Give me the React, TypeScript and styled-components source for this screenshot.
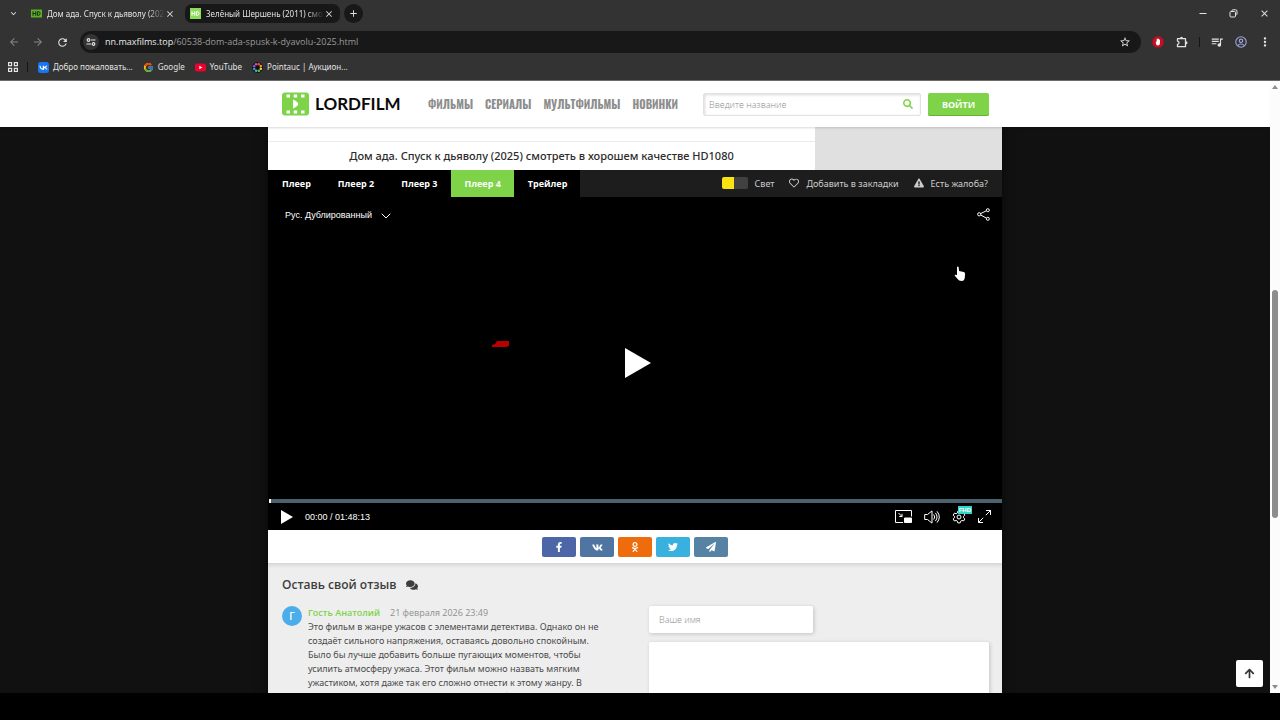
import React from "react";
import styled, { createGlobalStyle, css } from "styled-components";
import {
  FaComments,
  FaExclamationTriangle,
  FaFacebookF,
  FaOdnoklassniki,
  FaPaperPlane,
  FaRegHeart,
  FaSearch,
  FaTwitter,
  FaVk,
  FaArrowUp,
} from "react-icons/fa";
import {
  MdArrowBack,
  MdArrowForward,
  MdClose,
  MdExpandMore,
  MdMoreVert,
  MdQueueMusic,
  MdRefresh,
  MdStarBorder,
  MdAdd,
} from "react-icons/md";
import { FcGoogle } from "react-icons/fc";

const siteFont = `"Open Sans", "Noto Sans", sans-serif`;
const textFont = `"Noto Sans", "Open Sans", sans-serif`;
const green = "#7ed348";

const GlobalStyle = createGlobalStyle`
  * { box-sizing: border-box; }
  body { margin: 0; background: #000; font-family: ${siteFont}; }
  button, input, textarea { font-family: inherit; margin: 0; border: 0; padding: 0; }
  button { background: none; color: inherit; cursor: pointer; }
  a { color: inherit; text-decoration: none; }
  h1, h2, p { margin: 0; }
  svg { display: block; flex: none; }
`;

const Screen = styled.div`
  display: flex;
  flex-direction: column;
  height: 100vh;
  padding-bottom: 27px;
  background: #000;
  overflow: hidden;
`;

/* Browser chrome */

const Chrome = styled.header`
  flex: none;
  background: #333333;
  color: #e3e3e3;
  font-family: ${textFont};
  font-size: 8px;
  line-height: 12px;
  border-bottom: 1px solid #6a6a6a;
`;

const TabStrip = styled.div`
  display: flex;
  align-items: center;
  height: 27px;
  padding-left: 7px;
`;

const IconButton = styled.button<{ $w?: number; $h?: number; $bg?: string; $dim?: boolean }>`
  display: flex;
  flex: none;
  align-items: center;
  justify-content: center;
  width: ${(p) => p.$w ?? 24}px;
  height: ${(p) => p.$h ?? 20}px;
  border-radius: 10px;
  background: ${(p) => p.$bg ?? "transparent"};
  color: ${(p) => (p.$dim ? "#858585" : "#e3e3e3")};
`;

const TabList = styled.div`
  display: flex;
  flex: 0 1 314px;
  gap: 4px;
  min-width: 0;
  margin: 0 4px 0 7px;
`;

const BrowserTab = styled.div<{ $inactive?: boolean }>`
  display: flex;
  flex: 1;
  align-items: center;
  min-width: 0;
  height: 19px;
  padding: 0 6px 0 5px;
  border-radius: 7px;
  background: ${(p) => (p.$inactive ? "#181818" : "transparent")};
`;

const TabTitle = styled.span`
  flex: 1;
  min-width: 0;
  margin-left: 5px;
  overflow: hidden;
  white-space: nowrap;
  mask-image: linear-gradient(to right, #000 85%, transparent);
`;

const Spacer = styled.div`
  flex: 1;
`;

const Toolbar = styled.div`
  display: flex;
  align-items: center;
  height: 30px;
  padding: 0 3px 0 2px;
`;

const AddressBar = styled.div`
  display: flex;
  flex: 1;
  align-items: center;
  min-width: 0;
  height: 22px;
  margin: 0 5px 0 6px;
  padding: 0 4px 0 3px;
  border-radius: 11px;
  background: #181818;
  color: #9a9a9a;
  font-family: ${siteFont};
  font-size: 9px;
  white-space: nowrap;
`;

const Host = styled.span`
  color: #ececec;
`;

const Url = styled.span`
  margin-left: 6px;
`;

const Divider = styled.span`
  flex: none;
  width: 1px;
  height: 10px;
  margin: 0 5px;
  background: #151515;
`;

const Bookmarks = styled.nav`
  display: flex;
  align-items: center;
  gap: 10px;
  height: 20px;
  margin-bottom: 3px;
  padding-left: 8px;
`;

const AppsButton = styled.button`
  display: flex;
  align-items: center;
  padding-right: 9px;
  border-right: 1px solid #151515;
`;

const Bookmark = styled.a`
  display: flex;
  align-items: center;
  gap: 4px;
  white-space: nowrap;
`;

/* Page */

const Viewport = styled.div`
  position: relative;
  display: flex;
  flex: 1;
  min-height: 0;
  background: #111;
`;

const Page = styled.div`
  flex: 1;
  min-width: 0;
  overflow: hidden;
`;

const SiteHeader = styled.header`
  position: relative;
  z-index: 1;
  background: #fff;
  box-shadow: 0 1px 2px rgba(0, 0, 0, 0.15);
`;

const Container = styled.div`
  width: 100%;
  max-width: 734px;
  margin: 0 auto;
`;

const HeaderInner = styled(Container)`
  display: grid;
  grid-template-columns: 146px 1fr 218px 68px;
  align-items: center;
  height: 46px;
  padding: 0 13px 0 14px;
`;

const Logo = styled.a`
  display: flex;
  align-items: center;
  gap: 6px;
  color: #0a0a0a;
  font-family: Lato, sans-serif;
  font-size: 17px;
  font-weight: 700;
  line-height: 24px;
`;

const MainNav = styled.nav`
  display: flex;
  gap: 12px;
  color: #8d8d8d;
  font-family: Oswald, "Roboto Condensed", "Liberation Sans Narrow", "DejaVu Sans Condensed", sans-serif;
  font-size: 11px;
  font-weight: 700;
  line-height: 20px;
  white-space: nowrap;
`;

const Search = styled.form`
  display: flex;
  align-items: center;
  height: 23px;
  padding: 0 7px 0 5px;
  border: 1px solid #e2e2e2;
  border-radius: 2px;
  background: #fff;
  box-shadow: inset 1px 1px 3px rgba(0, 0, 0, 0.15);
`;

const SearchInput = styled.input`
  flex: 1;
  min-width: 0;
  background: transparent;
  outline: none;
  font-size: 9px;
  font-weight: 300;
  color: #333;
  &::placeholder { color: #8a8a8a; opacity: 1; }
`;

const SearchButton = styled.button`
  color: ${green};
`;

const LoginButton = styled.button`
  height: 23px;
  margin-left: 7px;
  border-radius: 2px;
  background: ${green};
  box-shadow: inset 0 -1px 0 #65b236;
  color: #fff;
  font-size: 9px;
  font-weight: 700;
`;

const Content = styled(Container)`
  box-shadow: 0 0 10px rgba(0, 0, 0, 0.6);
`;

const TitleRow = styled.div`
  display: flex;
  height: 43px;
  background: #e0e0e0;
`;

const TitleColumn = styled.div`
  width: 547px;
  padding-top: 14px;
  background: #fff;
`;

const Title = styled.h1`
  border-top: 1px solid #ebebeb;
  color: #2c2c2c;
  font-family: ${textFont};
  font-size: 11px;
  font-weight: 500;
  line-height: 28px;
  text-align: center;
  white-space: nowrap;
`;

const PlayerBar = styled.div`
  display: flex;
  height: 27px;
  background: #1d1d1d;
  color: #ccc;
  line-height: 26px;
`;

const PlayerTab = styled.button<{ $active?: boolean }>`
  padding: 0 13px 1px 14px;
  background: ${(p) => (p.$active ? green : "#000")};
  color: #fff;
  font-size: 9px;
  font-weight: 700;
  white-space: nowrap;
`;

const BarActions = styled.div`
  display: flex;
  align-items: center;
  gap: 15px;
  margin-left: auto;
  padding: 0 14px 1px 0;
  font-family: ${textFont};
  white-space: nowrap;
`;

const BarAction = styled.button`
  display: flex;
  align-items: center;
  gap: 7px;
  font-size: 9px;
`;

const LightSwitch = styled.span`
  width: 26px;
  height: 12px;
  border-left: 12px solid #fbe212;
  border-radius: 2px;
  background: #414141;
`;

const Player = styled.section`
  background: #000;
  color: #fff;
  font-family: "Liberation Sans", Arial, sans-serif;
`;

const Stage = styled.div`
  position: relative;
  display: flex;
  align-items: flex-start;
  justify-content: space-between;
  height: 302px;
  padding: 11px 12px 0 17px;
`;

const VoiceButton = styled.button`
  display: flex;
  align-items: center;
  gap: 9px;
  font-size: 9px;
  line-height: 15px;
`;

const BigPlay = styled.button`
  position: absolute;
  top: 151px;
  left: 357px;
`;

const Smudge = styled.svg`
  position: absolute;
  top: 143px;
  left: 224px;
`;

const Pointer = styled.svg`
  position: absolute;
  top: 69px;
  right: 36px;
`;

const Progress = styled.div`
  height: 4px;
  margin-left: 1px;
  border-left: 2px solid #fff;
  background: #4c6170;
`;

const Controls = styled.div`
  display: flex;
  align-items: center;
  gap: 12px;
  height: 27px;
  padding: 0 11px 0 13px;
  font-size: 9px;
`;

const QualityButton = styled.button`
  position: relative;
`;

const QualityBadge = styled.span`
  position: absolute;
  top: -4px;
  right: -6px;
  padding: 0 1px;
  background: #2fd5c8;
  color: #fff;
  font-size: 6px;
  font-weight: 700;
  line-height: 8px;
`;

const ShareRow = styled.div`
  display: flex;
  justify-content: center;
  gap: 4px;
  height: 33px;
  padding-top: 7px;
  background: #fff;
`;

const ShareLink = styled.a<{ $color: string }>`
  display: flex;
  align-items: center;
  justify-content: center;
  width: 34px;
  height: 20px;
  border-radius: 2px;
  background: ${(p) => p.$color};
  color: #fff;
`;

const Comments = styled.section`
  padding: 13px 13px 0 14px;
  background: #eee;
  box-shadow: inset 0 4px 4px -2px rgba(0, 0, 0, 0.12);
`;

const CommentsTitle = styled.h2`
  display: flex;
  align-items: center;
  gap: 10px;
  color: #3d3d3d;
  font-size: 12px;
  font-weight: 600;
  line-height: 18px;
`;

const CommentsGrid = styled.div`
  display: grid;
  grid-template-columns: minmax(0, 1fr) 340px;
  gap: 34px;
  padding-top: 12px;
`;

const Comment = styled.article`
  display: flex;
  gap: 6px;
`;

const Avatar = styled.div`
  flex: none;
  width: 20px;
  height: 20px;
  border-radius: 50%;
  background: #4badea;
  color: #fff;
  font-size: 10px;
  font-weight: 600;
  line-height: 20px;
  text-align: center;
`;

const CommentMeta = styled.div`
  display: flex;
  gap: 10px;
  color: #8f8f8f;
  font-size: 9px;
  line-height: 14px;
`;

const Author = styled.span`
  color: ${green};
  font-weight: 600;
`;

const CommentText = styled.p`
  color: #4a4a4a;
  font-family: ${textFont};
  font-size: 9px;
  line-height: 14px;
  white-space: nowrap;
`;

const fieldStyle = css`
  display: block;
  border-radius: 2px;
  background: #fff;
  box-shadow: 1px 1px 4px rgba(0, 0, 0, 0.18);
  outline: none;
  resize: none;
  font-size: 9px;
  font-weight: 300;
  &::placeholder { color: #8a8a8a; opacity: 1; }
`;

const NameInput = styled.input`
  ${fieldStyle}
  width: 164px;
  height: 27px;
  padding: 0 10px;
`;

const MessageInput = styled.textarea`
  ${fieldStyle}
  width: 100%;
  height: 94px;
  margin-top: 9px;
  padding: 10px;
`;

const ToTop = styled.button`
  position: absolute;
  right: 17px;
  bottom: 6px;
  display: flex;
  align-items: center;
  justify-content: center;
  width: 27px;
  height: 27px;
  border-radius: 2px;
  background: #fff;
  color: #333;
`;

const Scrollbar = styled.div`
  display: flex;
  flex: none;
  flex-direction: column;
  align-items: center;
  justify-content: space-between;
  width: 10px;
  padding: 4px 0;
  background: #fcfcfc;
`;

const Track = styled.div`
  flex: 1;
  padding-top: 201px;
`;

const Thumb = styled.div`
  width: 6px;
  height: 228px;
  border-radius: 3px;
  background: #8c8c8c;
`;

const HdBadge = ({ bright }: { bright?: boolean }) => (
  <svg width="11" height="11" viewBox="0 0 11 11">
    <rect y={bright ? 0 : 1.5} width="11" height={bright ? 11 : 8} fill={bright ? "#8ddc58" : "#5cae2c"} />
    <path
      d="M2 3.300v4.500M4.800 3.300v4.500M2 5.500h2.800M6.600 3.600h.9q1.600.3 1.600 1.900t-1.600 1.900h-.9z"
      fill="none"
      stroke={bright ? "#fff" : "#12300a"}
    />
  </svg>
);

const TuneIcon = () => (
  <svg width="10" height="10" viewBox="0 0 10 10" fill="none" stroke="#e3e3e3" strokeWidth="1.200">
    <circle cx="2.500" cy="3" r="1.300" />
    <path d="M5 3h4.500M.5 7H5" />
    <circle cx="7.500" cy="7" r="1.300" />
  </svg>
);

const AppsIcon = () => (
  <svg width="10" height="10" viewBox="0 0 10 10" fill="none" stroke="#e3e3e3" strokeWidth="1.200">
    <path d="M.6 .6h3v3h-3zM6.400 .6h3v3h-3zM.6 6.400h3v3h-3zM6.400 6.400h3v3h-3z" />
  </svg>
);

const VkIcon = () => (
  <svg width="11" height="11" viewBox="0 0 11 11">
    <rect width="11" height="11" rx="2.500" fill="#1a75f0" />
    <path d="M2 3.700q.3 3.400 3.400 3.700V3.700M8.700 3.700Q8 5.200 5.800 5.500 8 5.800 9 7.400" fill="none" stroke="#fff" strokeWidth="1.200" />
  </svg>
);

const YoutubeIcon = () => (
  <svg width="11" height="11" viewBox="0 0 11 11">
    <rect y="1.500" width="11" height="8" rx="2" fill="#f0002c" />
    <path d="M4.300 3.700v3.600l3-1.800z" fill="#fff" />
  </svg>
);

const dotColors = ["#e8443a", "#f39a2b", "#e8df3c", "#5fc04a", "#35b8a8", "#4a8be0", "#7c5bd6", "#d64fa5"];

const PointaucIcon = () => (
  <svg width="11" height="11" viewBox="-5.500 -5.500 11 11">
    <circle r="5.400" fill="#111" />
    {dotColors.map((color, i) => (
      <circle
        key={color}
        cx={3.6 * Math.cos((i * Math.PI) / 4 - 1.2)}
        cy={3.6 * Math.sin((i * Math.PI) / 4 - 1.2)}
        r="1.300"
        fill={color}
      />
    ))}
  </svg>
);

const AdblockIcon = () => (
  <svg width="12" height="12" viewBox="0 0 12 12">
    <path d="M3.600 .5h4.800l3.100 3.100v4.800l-3.100 3.100H3.600L.5 8.400V3.600z" fill="#c70d22" />
    <path d="M3.700 5.500l.9.600V3.300h.8V2.500h.9v.5h.9v.7h.8v3.700q-.3 2-2 2-1.300 0-1.800-1z" fill="#fff" />
  </svg>
);

const ExtensionIcon = () => (
  <svg width="12" height="12" viewBox="0 0 12 12">
    <path
      d="M1.500 2.700h8v8h-8V8.300q1.500-.1 1.500-1.600T1.500 5.100z"
      fill="none"
      stroke="#e3e3e3"
      strokeWidth="1.300"
      strokeLinejoin="round"
    />
    <path d="M4 2.200a1.500 1.500 0 0 1 3 0zM10 5.200a1.500 1.500 0 0 1 0 3z" fill="#e3e3e3" />
  </svg>
);

const ProfileIcon = () => (
  <svg width="12" height="12" viewBox="0 0 12 12" fill="none" stroke="#a3a5dc" strokeWidth="1.100">
    <circle cx="6" cy="6" r="5.200" />
    <circle cx="6" cy="4.800" r="1.700" />
    <path d="M2.700 9.700Q3.600 8 6 8t3.300 1.700" />
  </svg>
);

const RestoreIcon = () => (
  <svg width="9" height="9" viewBox="0 0 9 9" fill="none" stroke="#e3e3e3">
    <rect x="1" y="2.500" width="5.500" height="5.500" rx="1" />
    <path d="M3 2V1.500q0-.7.700-.7h3q1.300 0 1.300 1.300v3q0 .7-.7.700" />
  </svg>
);

const MinimizeIcon = () => (
  <svg width="8" height="8" viewBox="0 0 8 8">
    <path d="M.5 3.500h7" stroke="#e3e3e3" />
  </svg>
);

const FilmLogo = () => (
  <svg width="27" height="24" viewBox="0 0 27 24">
    <rect y=".5" width="27" height="23" rx="3" fill={green} />
    <path
      d="M4.500 2.500h3.500v3H4.500zM11.700 2.500h3.500v3h-3.500zM19 2.500h3.500v3H19zM4.500 18.500h3.500v3H4.500zM11.700 18.500h3.500v3h-3.500zM19 18.500h3.500v3H19z"
      fill="#fff"
    />
    <path d="M11.500 8q4 2 4.500 4-.5 2-4.500 4z" fill="#fff" stroke="#fff" strokeLinejoin="round" />
  </svg>
);

const lineIcon = { fill: "none", stroke: "#fff", strokeWidth: 1 };

const ShareIcon = () => (
  <svg width="13" height="13" viewBox="0 0 13 13" {...lineIcon}>
    <circle cx="2.200" cy="6.300" r="1.600" />
    <circle cx="10.800" cy="2.200" r="1.500" />
    <circle cx="10.800" cy="10.800" r="1.500" />
    <path d="M3.700 5.600l5.700-2.800M3.700 7l5.700 3.100" />
  </svg>
);

const PipIcon = () => (
  <svg width="17" height="13" viewBox="0 0 17 13" {...lineIcon}>
    <path d="M8 12.500H.5V.5h16v6" />
    <path d="M3.500 3l3.500 3.500M7 3.800v2.700H4.300" />
    <path d="M9.500 8h7v4.500h-7z" fill="#fff" />
  </svg>
);

const VolumeIcon = () => (
  <svg width="16" height="14" viewBox="0 0 16 14" {...lineIcon}>
    <path d="M.7 4.500h2.800L8 .9v12.200L3.500 9.500H.7z" />
    <path d="M9.700 4.500q2 2.500 0 5M11.400 2.900q3.300 4.100 0 8.200M13 1.300q4.600 5.700 0 11.400" />
  </svg>
);

const GearIcon = () => (
  <svg width="14" height="14" viewBox="0 0 14 14" {...lineIcon}>
    <path d="M5.800 1.200h2.400l.4 1.700 1.300.8 1.700-.6 1.200 2.100-1.300 1.200v1.300l1.300 1.200-1.200 2.100-1.700-.6-1.300.8-.4 1.700H5.800l-.4-1.700-1.300-.8-1.700.6-1.200-2.100 1.300-1.200V6.400L1.200 5.200l1.200-2.100 1.700.6 1.300-.8z" />
    <circle cx="7" cy="7" r="2" />
  </svg>
);

const FullscreenIcon = () => (
  <svg width="13" height="13" viewBox="0 0 13 13" {...lineIcon}>
    <path d="M8 .5h4.500V5M12.500 .5L7.800 5.200M5 12.500H.5V8M.5 12.500l4.700-4.700" />
  </svg>
);

const commentLines = [
  "Это фильм в жанре ужасов с элементами детектива. Однако он не",
  "создаёт сильного напряжения, оставаясь довольно спокойным.",
  "Было бы лучше добавить больше пугающих моментов, чтобы",
  "усилить атмосферу ужаса. Этот фильм можно назвать мягким",
  "ужастиком, хотя даже так его сложно отнести к этому жанру. В",
  "фильме нет ничего пугающего, а просто особый",
];

const shares = [
  { label: "Facebook", color: "#4d66a8", icon: <FaFacebookF size={10} /> },
  { label: "ВКонтакте", color: "#5175a3", icon: <FaVk size={11} /> },
  { label: "Одноклассники", color: "#ee6c0c", icon: <FaOdnoklassniki size={10} /> },
  { label: "Twitter", color: "#38b1de", icon: <FaTwitter size={10} /> },
  { label: "Telegram", color: "#5682a3", icon: <FaPaperPlane size={10} /> },
];

export default function App() {
  return (
    <Screen>
      <GlobalStyle />
      <Chrome>
        <TabStrip>
          <IconButton $w={12} aria-label="Поиск вкладок"><MdExpandMore size={11} /></IconButton>
          <TabList>
            <BrowserTab>
              <HdBadge />
              <TabTitle>Дом ада. Спуск к дьяволу (202</TabTitle>
              <MdClose size={10} />
            </BrowserTab>
            <BrowserTab $inactive>
              <HdBadge bright />
              <TabTitle>Зелёный Шершень (2011) смо</TabTitle>
              <MdClose size={10} />
            </BrowserTab>
          </TabList>
          <IconButton $w={19} $h={19} $bg="#181818" aria-label="Новая вкладка"><MdAdd size={11} /></IconButton>
          <Spacer />
          <IconButton $w={31} aria-label="Свернуть"><MinimizeIcon /></IconButton>
          <IconButton $w={31} aria-label="Восстановить"><RestoreIcon /></IconButton>
          <IconButton $w={31} aria-label="Закрыть"><MdClose size={11} /></IconButton>
        </TabStrip>
        <Toolbar>
          <IconButton $dim aria-label="Назад"><MdArrowBack size={12} /></IconButton>
          <IconButton $dim aria-label="Вперёд"><MdArrowForward size={12} /></IconButton>
          <IconButton aria-label="Обновить"><MdRefresh size={13} /></IconButton>
          <AddressBar>
            <IconButton $w={16} $h={16} $bg="#333" aria-label="Сведения о сайте"><TuneIcon /></IconButton>
            <Url><Host>nn.maxfilms.top</Host>/60538-dom-ada-spusk-k-dyavolu-2025.html</Url>
            <Spacer />
            <IconButton aria-label="В закладки"><MdStarBorder size={12} /></IconButton>
          </AddressBar>
          <IconButton aria-label="Блокировщик рекламы"><AdblockIcon /></IconButton>
          <IconButton aria-label="Расширения"><ExtensionIcon /></IconButton>
          <Divider />
          <IconButton aria-label="Медиа"><MdQueueMusic size={14} /></IconButton>
          <IconButton aria-label="Профиль"><ProfileIcon /></IconButton>
          <IconButton aria-label="Меню"><MdMoreVert size={14} /></IconButton>
        </Toolbar>
        <Bookmarks>
          <AppsButton aria-label="Приложения"><AppsIcon /></AppsButton>
          <Bookmark href="#vk"><VkIcon />Добро пожаловать...</Bookmark>
          <Bookmark href="#google"><FcGoogle size={11} />Google</Bookmark>
          <Bookmark href="#youtube"><YoutubeIcon />YouTube</Bookmark>
          <Bookmark href="#pointauc"><PointaucIcon />Pointauc | Аукцион...</Bookmark>
        </Bookmarks>
      </Chrome>
      <Viewport>
        <Page>
          <SiteHeader>
            <HeaderInner>
              <Logo href="#home"><FilmLogo />LORDFILM</Logo>
              <MainNav>
                <a href="#films">ФИЛЬМЫ</a>
                <a href="#series">СЕРИАЛЫ</a>
                <a href="#cartoons">МУЛЬТФИЛЬМЫ</a>
                <a href="#new">НОВИНКИ</a>
              </MainNav>
              <Search>
                <SearchInput aria-label="Поиск" placeholder="Введите название" />
                <SearchButton type="button" aria-label="Найти"><FaSearch size={10} /></SearchButton>
              </Search>
              <LoginButton>ВОЙТИ</LoginButton>
            </HeaderInner>
          </SiteHeader>
          <Content as="main">
            <TitleRow>
              <TitleColumn>
                <Title>Дом ада. Спуск к дьяволу (2025) смотреть в хорошем качестве HD1080</Title>
              </TitleColumn>
            </TitleRow>
            <PlayerBar>
              <PlayerTab>Плеер</PlayerTab>
              <PlayerTab>Плеер 2</PlayerTab>
              <PlayerTab>Плеер 3</PlayerTab>
              <PlayerTab $active>Плеер 4</PlayerTab>
              <PlayerTab>Трейлер</PlayerTab>
              <BarActions>
                <BarAction><LightSwitch />Свет</BarAction>
                <BarAction><FaRegHeart size={10} />Добавить в закладки</BarAction>
                <BarAction><FaExclamationTriangle size={10} />Есть жалоба?</BarAction>
              </BarActions>
            </PlayerBar>
            <Player>
              <Stage>
                <VoiceButton>
                  Рус. Дублированный
                  <svg width="10" height="6" viewBox="0 0 10 6" {...lineIcon}><path d="M.7 .7L5 5 9.300 .7" /></svg>
                </VoiceButton>
                <button aria-label="Поделиться"><ShareIcon /></button>
                <Smudge width="18" height="8" viewBox="0 0 18 8"><path d="M0 5l3-1 2-3h12v5l-3 1H0z" fill="#b80000" /></Smudge>
                <BigPlay aria-label="Смотреть">
                  <svg width="26" height="30" viewBox="0 0 26 30"><path d="M0 0l26 15L0 30z" fill="#fff" /></svg>
                </BigPlay>
                <Pointer width="12" height="16" viewBox="0 0 12 16">
                  <path d="M3 1q1-.8 1.600 0l.5 4 4.700 1q1.400.5 1.300 2l-.3 3.500q-.3 3.500-3.300 3.500-2.700 0-3.900-2L.6 9.500q.3-1.300 2-.5L3 9.300z" fill="#fff" />
                </Pointer>
              </Stage>
              <Progress />
              <Controls>
                <button aria-label="Воспроизвести">
                  <svg width="12" height="14" viewBox="0 0 12 14"><path d="M0 0l12 7L0 14z" fill="#fff" /></svg>
                </button>
                <span>00:00 / 01:48:13</span>
                <Spacer />
                <button aria-label="Картинка в картинке"><PipIcon /></button>
                <button aria-label="Звук"><VolumeIcon /></button>
                <QualityButton aria-label="Настройки"><GearIcon /><QualityBadge>FHD</QualityBadge></QualityButton>
                <button aria-label="Во весь экран"><FullscreenIcon /></button>
              </Controls>
            </Player>
            <ShareRow>
              {shares.map((s) => (
                <ShareLink key={s.label} href="#share" aria-label={s.label} $color={s.color}>{s.icon}</ShareLink>
              ))}
            </ShareRow>
            <Comments>
              <CommentsTitle>Оставь свой отзыв <FaComments size={12} /></CommentsTitle>
              <CommentsGrid>
                <Comment>
                  <Avatar>Г</Avatar>
                  <div>
                    <CommentMeta><Author>Гость Анатолий</Author><time>21 февраля 2026 23:49</time></CommentMeta>
                    <CommentText>
                      {commentLines.map((line) => (
                        <React.Fragment key={line}>{line}<br /></React.Fragment>
                      ))}
                    </CommentText>
                  </div>
                </Comment>
                <form>
                  <NameInput aria-label="Ваше имя" placeholder="Ваше имя" />
                  <MessageInput aria-label="Отзыв" />
                </form>
              </CommentsGrid>
            </Comments>
          </Content>
        </Page>
        <ToTop aria-label="Наверх"><FaArrowUp size={11} /></ToTop>
        <Scrollbar>
          <svg width="6" height="4" viewBox="0 0 6 4"><path d="M0 4l3-4 3 4z" fill="#8c8c8c" /></svg>
          <Track><Thumb /></Track>
          <svg width="6" height="4" viewBox="0 0 6 4"><path d="M0 0l3 4 3-4z" fill="#8c8c8c" /></svg>
        </Scrollbar>
      </Viewport>
    </Screen>
  );
}
